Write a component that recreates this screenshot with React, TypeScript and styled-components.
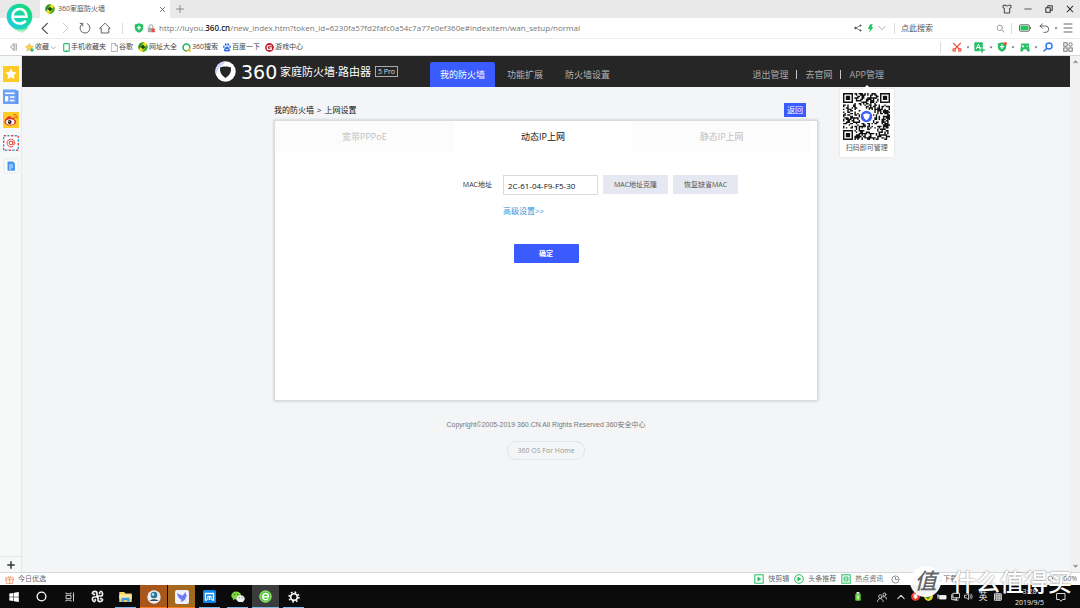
import React from 'react';
import styled, { createGlobalStyle, css } from 'styled-components';

const GlobalStyle = createGlobalStyle`
  * { box-sizing: border-box; }
  html, body, #root { height: 100%; }
  body {
    margin: 0;
    font-family: "Open Sans", "Noto Sans CJK SC", sans-serif;
    font-size: 7px;
    line-height: 12px;
    color: #444;
    overflow: hidden;
  }
  button, input { font: inherit; color: inherit; padding: 0; border: 0; background: none; }
  button { cursor: pointer; white-space: nowrap; }
  a { color: inherit; text-decoration: none; white-space: nowrap; }
  svg { display: block; flex: none; }
`;

/* ---------- browser frame ---------- */

const Desktop = styled.div`
  position: relative;
  display: flex;
  flex-direction: column;
  min-height: 100vh;
  background: #fff;
`;

const TabStrip = styled.header`
  display: flex;
  align-items: center;
  height: 18px;
  padding-left: 40px;
  background: #e9e9e9;
`;

const BrowserLogo = styled.div`
  position: absolute;
  left: 6px;
  top: 3px;
`;

const BrowserTab = styled.div`
  display: flex;
  align-items: center;
  gap: 3px;
  width: 130px;
  height: 18px;
  padding: 0 4px 0 5px;
  background: #fff;
  color: #555;
`;

const Spacer = styled.div`
  flex: 1;
`;

const IconButton = styled.button<{ $w?: number }>`
  display: flex;
  align-items: center;
  justify-content: center;
  flex: none;
  width: ${(p) => p.$w ?? 20}px;
  height: 16px;
`;

const AddressRow = styled.div`
  display: flex;
  align-items: center;
  height: 21px;
  padding: 0 2px 0 35px;
  border-bottom: 1px solid #ececec;
`;

const Divider = styled.span<{ $gap?: number }>`
  flex: none;
  width: 1px;
  height: 11px;
  margin: 0 ${(p) => p.$gap ?? 6}px;
  background: #dcdcdc;
`;

const UrlBox = styled.div`
  flex: 1;
  display: flex;
  align-items: center;
  gap: 3px;
  min-width: 0;
  padding-left: 4px;
  color: #777;
  font-size: 8px;
  white-space: nowrap;
  b { color: #222; font-weight: 600; }
`;

const SearchField = styled.input`
  width: 92px;
  font-size: 8px;
  outline: none;
  &::placeholder { color: #555; opacity: 1; }
`;

const BookmarkRow = styled.nav`
  display: flex;
  align-items: center;
  height: 17px;
  padding-right: 2px;
  border-bottom: 1px solid #d5d8d5;
`;

const Bookmark = styled.a<{ $after?: number }>`
  display: flex;
  align-items: center;
  gap: 1px;
  margin-right: ${(p) => p.$after ?? 5}px;
`;

const Body = styled.div`
  flex: 1;
  display: flex;
  min-height: 0;
`;

const Rail = styled.aside`
  display: flex;
  flex-direction: column;
  align-items: center;
  width: 22px;
  padding-top: 10px;
  gap: 7px;
  background: #f7f8f8;
  border-right: 1px solid #e6e8ea;
`;

const RailButton = styled.button`
  width: 16px;
  height: 16px;
`;

const RailAdd = styled.button`
  display: flex;
  align-items: center;
  justify-content: center;
  width: 100%;
  height: 16px;
  margin-top: auto;
  border-top: 1px solid #e3e5e7;
`;

const ScrollTrack = styled.div`
  display: flex;
  flex-direction: column;
  justify-content: space-between;
  align-items: center;
  width: 10px;
  padding: 3px 0;
  background: #f1f1f1;
`;

/* ---------- router page ---------- */

const Page = styled.main`
  flex: 1;
  background: #f4f5f7;
`;

const SiteHeader = styled.header`
  height: 31px;
  background: #262626;
`;

const HeaderInner = styled.div`
  display: flex;
  align-items: flex-end;
  width: 686px;
  height: 31px;
  margin: 0 auto;
  padding: 0 5px 0 12px;
`;

const Brand = styled.a`
  display: flex;
  align-items: center;
  height: 31px;
  width: 215px;
  color: #fff;
`;

const BrandDigits = styled.span`
  width: 39px;
  margin-left: 5px;
  font: 19px/20px "DejaVu Sans", sans-serif;
`;

const BrandName = styled.span`
  margin-right: 4px;
  font-size: 11px;
`;

const BrandBadge = styled.span`
  padding: 0 2px;
  border: 1px solid #aaa;
  font-size: 7px;
  line-height: 9px;
  color: #ddd;
`;

const MainNav = styled.nav`
  display: flex;
  gap: 2px;
`;

const NavLink = styled.a<{ $active?: boolean }>`
  height: 25px;
  padding: 0 10px;
  font-size: 9px;
  line-height: 25px;
  color: #b4b4b4;
  ${(p) => p.$active && css`
    background: #3a5cff;
    color: #fff;
    border-radius: 2px 2px 0 0;
  `}
`;

const UserNav = styled.nav`
  display: flex;
  align-items: center;
  gap: 8px;
  height: 25px;
  margin-left: auto;
  font-size: 9px;
  color: #a8a8a8;
`;

const NavBar = styled.i`
  width: 1px;
  height: 9px;
  background: #c4c4c4;
`;

const AppLink = styled.div`
  position: relative;
`;

const QrCard = styled.div`
  position: absolute;
  top: 20px;
  left: 50%;
  transform: translateX(-50%);
  width: 54px;
  height: 68px;
  padding: 4px 3px 0;
  background: #fff;
  box-shadow: 0 0 2px rgba(0, 0, 0, 0.12);
  color: #555;
  font-size: 7px;
  text-align: center;
  white-space: nowrap;
  z-index: 1;
  svg { margin: 0 auto 2px; }
  &::before {
    content: "";
    position: absolute;
    left: 50%;
    bottom: 100%;
    margin-left: -4px;
    border: 4px solid transparent;
    border-top: 0;
    border-bottom-color: #fff;
  }
`;

const Content = styled.div`
  width: 544px;
  margin: 0 auto;
  padding-top: 16px;
`;

const CrumbRow = styled.div`
  display: flex;
  align-items: center;
  justify-content: space-between;
  height: 14px;
  padding-right: 12px;
  margin-bottom: 3px;
  font-size: 8px;
  color: #111;
`;

const Crumbs = styled.div`
  display: flex;
  gap: 3px;
`;

const BackButton = styled.button`
  width: 22px;
  height: 14px;
  background: #3a5cff;
  color: #fff;
  font-size: 8px;
`;

const Panel = styled.section`
  min-height: 281px;
  background: #fff;
  border: 1px solid #dadbdd;
  box-shadow: 0 0 3px rgba(0, 0, 0, 0.2);
`;

const TabList = styled.div`
  display: grid;
  grid-template-columns: repeat(3, 1fr);
  padding-right: 6px;
`;

const PanelTab = styled.button<{ $active?: boolean }>`
  height: 31px;
  font-size: 9px;
  color: ${(p) => (p.$active ? '#111' : '#bfbfbf')};
  background: ${(p) => (p.$active ? '#fff' : '#fcfcfc')};
`;

const WanForm = styled.form`
  display: grid;
  grid-template-columns: 217px 1fr;
  column-gap: 11px;
  align-items: center;
  margin-top: 23px;
`;

const FieldLabel = styled.label`
  text-align: right;
  color: #333;
`;

const FieldRow = styled.div`
  display: flex;
  gap: 5px;
`;

const MacInput = styled.input`
  width: 95px;
  height: 20px;
  padding: 0 4px;
  border: 1px solid #d9d9de;
  background: #fff;
  color: #111;
  font-size: 8px;
`;

const SoftButton = styled.button`
  width: 65px;
  height: 19px;
  background: #e5e8f0;
  color: #555;
`;

const AdvancedLink = styled.a`
  grid-column: 2;
  justify-self: start;
  margin-top: 10px;
  color: #3b9ae0;
  font-size: 8px;
`;

const SubmitButton = styled.button`
  grid-column: 1 / -1;
  justify-self: center;
  width: 65px;
  height: 19px;
  margin-top: 27px;
  border-radius: 1px;
  background: #3a5cff;
  color: #fff;
  font-weight: 700;
`;

const SiteFooter = styled.footer`
  display: flex;
  flex-direction: column;
  align-items: center;
  gap: 10px;
  padding-top: 18px;
  color: #777;
  font-family: "Liberation Sans", "Noto Sans CJK SC", sans-serif;
`;

const OsPill = styled.a`
  padding: 0 9px;
  border: 1px solid #e2e4e6;
  border-radius: 9px;
  color: #999;
  font-family: "Open Sans", sans-serif;
  line-height: 17px;
`;

/* ---------- status bar and taskbar ---------- */

const StatusBar = styled.footer`
  display: flex;
  align-items: center;
  height: 13px;
  padding: 0 3px 0 5px;
  border-top: 1px solid #d5d8d8;
  background: #fff;
  color: #666;
`;

const StatusItem = styled.button<{ $after?: number }>`
  display: flex;
  align-items: center;
  gap: 4px;
  margin-right: ${(p) => p.$after ?? 5}px;
`;

const Taskbar = styled.div`
  display: flex;
  height: 23px;
  background: #0b0b0b;
  color: #eee;
`;

const TaskApps = styled.div`
  display: flex;
  gap: 1px;
`;

const TaskButton = styled.button<{ $bg?: string; $line?: string; $full?: boolean }>`
  position: relative;
  display: flex;
  align-items: center;
  justify-content: center;
  width: 27px;
  height: 23px;
  background: ${(p) => p.$bg ?? 'transparent'};
  ${(p) => p.$line && css`
    &::after {
      content: "";
      position: absolute;
      left: ${p.$full ? 0 : 3}px;
      right: ${p.$full ? 0 : 3}px;
      bottom: 0;
      height: 1px;
      background: ${p.$line};
    }
  `}
`;

const Tray = styled.div`
  display: flex;
  align-items: center;
  margin-left: auto;
  padding-right: 11px;
`;

const TraySlot = styled.button<{ $w: number }>`
  display: flex;
  align-items: center;
  justify-content: center;
  width: ${(p) => p.$w}px;
  font-size: 9px;
`;

const Clock = styled.div`
  width: 47px;
  text-align: center;
  line-height: 11px;
`;

const Watermark = styled.div`
  position: absolute;
  right: 8px;
  bottom: 11px;
  display: flex;
  align-items: center;
  gap: 11px;
  color: #fff;
  font-size: 24px;
  line-height: 30px;
  font-weight: 500;
  text-shadow: 0 0 2px rgba(0, 0, 0, 0.55);
  white-space: nowrap;
  pointer-events: none;
`;

const WatermarkSeal = styled.span`
  width: 31px;
  height: 31px;
  border-radius: 50%;
  background: rgba(255, 255, 255, 0.95);
  color: #666;
  font-size: 22px;
  line-height: 29px;
  font-style: italic;
  text-align: center;
  text-shadow: none;
`;

/* ---------- drawings ---------- */

type StrokeProps = { d: string; w?: number; h?: number; box?: string; color?: string; sw?: number; fill?: string };

const Stroke = ({ d, w = 10, h = 10, box = '0 0 10 10', color = '#666', sw = 1, fill = 'none' }: StrokeProps) => (
  <svg width={w} height={h} viewBox={box} fill={fill} stroke={color} strokeWidth={sw} strokeLinecap="round" strokeLinejoin="round">
    <path d={d} />
  </svg>
);

const Caret = () => (
  <svg width="4" height="3" viewBox="0 0 4 3"><path d="M0.5 0.5h3L2 2.5z" fill="#666" /></svg>
);

const SafeBall = () => (
  <svg width="10" height="10" viewBox="0 0 10 10">
    <circle cx="5" cy="5" r="4.8" fill="#f6e01b" />
    <path d="M1.300 8A4.800 4.800 0 0 1 6.500.5C4 1.500 3.500 3 3.600 4.600 2.400 5.200 1.500 6.500 1.300 8z" fill="#1f9a36" />
    <path d="M8.700 2A4.800 4.800 0 0 1 3.500 9.500C6 8.500 6.500 7 6.400 5.400 7.600 4.800 8.500 3.500 8.700 2z" fill="#3fb53a" />
    <path d="M5 2.800v4.400M2.800 5h4.400" stroke="#123d14" strokeWidth="1.500" />
  </svg>
);

const BrowserE = () => (
  <svg width="28" height="32" viewBox="0 0 28 32">
    <defs>
      <linearGradient id="eGrad" x1="0" y1="1" x2="1" y2="0">
        <stop offset="0" stopColor="#1fc8f5" />
        <stop offset=".5" stopColor="#18d6ac" />
        <stop offset="1" stopColor="#16dc62" />
      </linearGradient>
      <linearGradient id="eTail" x1="0" y1="0" x2="0" y2="1">
        <stop offset="0" stopColor="#2be07c" />
        <stop offset="1" stopColor="#2be07c" stopOpacity="0" />
      </linearGradient>
    </defs>
    <path d="M6 24h16c-1 3-4 4-6 7-1-2-6-3-10-7z" fill="url(#eTail)" />
    <circle cx="13.500" cy="13.500" r="12.800" fill="url(#eGrad)" />
    <path d="M7 13.800H20.500C20.500 8.800 17.500 6 13.800 6 9.500 6 6.500 9.200 6.500 13.200c0 4.500 3.200 7.300 7.300 7.300 2.600 0 4.700-1 6-2.600" fill="none" stroke="#fff" strokeWidth="2.600" />
  </svg>
);

const ShieldIcon = ({ dot }: { dot?: boolean }) => (
  <svg width="10" height="10" viewBox="0 0 10 10">
    <path d="M5 .3 9.200 1.500v3.300C9.200 7.300 7.300 9 5 9.800 2.700 9 .8 7.300.8 4.800V1.500z" fill="#25c065" />
    <path d="M5 2.500v4.500M3 4.700h4" stroke="#fff" strokeWidth="1.200" />
    {dot && <circle cx="8.400" cy="1.600" r="1.600" fill="#f4503c" />}
  </svg>
);

const LockIcon = () => (
  <svg width="9" height="9" viewBox="0 0 9 9">
    <path d="M2 4V2.800a2 2 0 0 1 4 0V4" fill="none" stroke="#999" />
    <rect x="0.800" y="3.800" width="6.200" height="4.400" rx=".6" fill="#aaa" />
    <path d="m4.800 5 3.200 3.200M8 5 4.800 8.200" stroke="#e64040" strokeWidth="1.200" />
  </svg>
);

const StarBookmark = () => (
  <svg width="9" height="9" viewBox="0 0 9 9">
    <path d="m4.400.6 1.100 2.500 2.700.3-2 1.900.6 2.700-2.400-1.400L2 8l.6-2.700L.5 3.400l2.800-.3z" fill="#ffd65a" stroke="#f0a520" strokeWidth=".7" />
    <circle cx="7" cy="7" r="1.700" fill="#2fc274" />
  </svg>
);

const PawIcon = () => (
  <svg width="8" height="9" viewBox="0 0 8 9" fill="#2d6de8">
    <ellipse cx="2.700" cy="1.500" rx=".9" ry="1.300" /><ellipse cx="5.200" cy="1.500" rx=".9" ry="1.300" />
    <ellipse cx=".9" cy="3.800" rx=".8" ry="1.200" /><ellipse cx="7.100" cy="3.800" rx=".8" ry="1.200" />
    <path d="M4 3.600c1.400 0 1.700 1.500 2.600 2.300.9 1 .5 2.600-.9 2.600-.7 0-1-.3-1.700-.3s-1 .3-1.700.3C.9 8.500.5 6.900 1.400 5.900 2.300 5.100 2.600 3.600 4 3.600z" />
    <path d="M2.800 6.500h2.600" stroke="#fff" strokeWidth=".8" />
  </svg>
);

const GameBadge = () => (
  <svg width="9" height="9" viewBox="0 0 9 9">
    <circle cx="4.500" cy="4.500" r="4.400" fill="#c11f2e" />
    <path d="M6.700 2.800H3.200a1 1 0 0 0-.9 1v1.600a1 1 0 0 0 .9 1h3.100V4.700H4.500" fill="none" stroke="#fff" strokeWidth="1.100" />
  </svg>
);

const Scissors = () => (
  <svg width="10" height="10" viewBox="0 0 10 10" fill="none" stroke="#f2503e" strokeWidth="1.200">
    <path d="M1.200.8 7 7M8.800.8 3 7" /><circle cx="2.200" cy="7.900" r="1.300" /><circle cx="7.800" cy="7.900" r="1.300" />
  </svg>
);

const TranslateIcon = () => (
  <svg width="11" height="11" viewBox="0 0 10 10">
    <rect x=".3" y=".3" width="7.700" height="8" rx=".8" fill="#25c065" />
    <path d="m2 6.500 2-4.500 2 4.500M2.800 5h2.500" fill="none" stroke="#fff" strokeWidth=".9" />
    <path d="M7.300 4.800v5M4.800 7.300h5" stroke="#fff" strokeWidth="2.800" />
    <path d="M7.300 4.800v5M4.800 7.300h5" stroke="#25c065" strokeWidth="1.300" />
  </svg>
);

const Gamepad = () => (
  <svg width="10" height="9" viewBox="0 0 10 9">
    <path d="M1.200.6h7.600l.9 8H7.500L6.300 6.300H3.700L2.500 8.600H.3z" fill="#25c065" />
    <path d="M3 2v2.600M1.700 3.300h2.600M6.500 3.300h1.500" stroke="#fff" strokeWidth=".9" />
  </svg>
);

const BatteryIcon = () => (
  <svg width="12" height="8" viewBox="0 0 12 8">
    <rect x=".5" y=".8" width="9.800" height="6.400" rx=".8" fill="#fff" stroke="#666" />
    <rect x="1.500" y="1.800" width="7.800" height="4.400" fill="#1fc759" />
    <path d="M11.400 2.800v2.400" stroke="#666" />
  </svg>
);

const ShareIcon = () => (
  <svg width="8" height="8" viewBox="0 0 8 8" fill="#555" stroke="#555">
    <path d="M6.500 1.500 1.500 4l5 2.500" fill="none" strokeWidth=".7" />
    <circle cx="1.500" cy="4" r=".8" /><circle cx="6.500" cy="1.500" r=".6" /><circle cx="6.500" cy="6.500" r=".6" />
  </svg>
);

const AppsIcon = () => (
  <svg width="10" height="10" viewBox="0 0 10 10" fill="none" stroke="#666" strokeWidth=".9">
    <rect x=".8" y=".8" width="3.300" height="3.300" /><circle cx="7.500" cy="2.500" r="1.700" />
    <rect x=".8" y="5.900" width="3.300" height="3.300" /><rect x="5.900" y="5.900" width="3.300" height="3.300" />
  </svg>
);

const RailStar = () => (
  <svg width="16" height="16" viewBox="0 0 16 16">
    <rect width="16" height="16" fill="#ffc928" />
    <path d="m8 2.500 1.700 3.600 3.900.5-2.900 2.700.8 3.900L8 11.300l-3.500 1.900.8-3.900L2.400 6.600l3.900-.5z" fill="#fff" />
  </svg>
);

const RailNews = () => (
  <svg width="16" height="16" viewBox="0 0 16 16">
    <path d="M3 1.500h12.500V15H3z" fill="#5b93ef" /><rect y=".5" width="13.300" height="14.500" fill="#6ba1fb" />
    <path d="M2 4.300h9.500M7 8h4.500M7 11.500h4.500" stroke="#fff" strokeWidth="1.600" /><path d="M2 7.200h3.300v5.100H2z" fill="#fff" />
  </svg>
);

const RailWeibo = () => (
  <svg width="16" height="16" viewBox="0 0 16 16">
    <rect width="16" height="16" fill="#ffcb2b" />
    <path d="M6.300 4.300C4 5 1.500 7.500 1.500 9.800c0 2.300 2.700 3.700 5.700 3.700 3.600 0 6-1.800 6-3.900 0-1.300-1-1.900-2-2.200.4-1.400-.6-2-2.800-1.200.3-1.300-.3-2.300-2.100-1.900z" fill="#e6322b" />
    <ellipse cx="7.200" cy="9.900" rx="4.200" ry="2.700" fill="#fff" /><circle cx="6.700" cy="10" r="1.900" fill="#222" /><circle cx="6.200" cy="9.500" r=".6" fill="#fff" />
    <path d="M10.300 2.600c2.500-.4 4.200 1.500 3.700 4M10.800 4.700c1.200-.1 1.700.7 1.500 1.700" fill="none" stroke="#f0621d" strokeWidth="1.100" />
  </svg>
);

const RailMail = () => (
  <svg width="16" height="16" viewBox="0 0 16 16" fill="none">
    <rect x=".7" y=".7" width="14.600" height="14.600" fill="#fff" />
    <rect x=".7" y=".7" width="14.600" height="14.600" stroke="#e8483d" strokeWidth="1.400" strokeDasharray="2.400 4.900" />
    <rect x=".7" y=".7" width="14.600" height="14.600" stroke="#3f9be8" strokeWidth="1.400" strokeDasharray="2.400 4.900" strokeDashoffset="-3.650" />
    <circle cx="8" cy="8" r="1.800" stroke="#e8483d" strokeWidth="1.100" />
    <path d="M9.800 6v2.800c0 1.500 2 1.200 2-.8A3.900 3.900 0 1 0 10 11.300" stroke="#e8483d" strokeWidth="1" />
  </svg>
);

const RailDoc = () => (
  <svg width="16" height="16" viewBox="0 0 16 16">
    <rect x="1" y="1" width="14" height="14" rx="2" fill="#fff" stroke="#e6e8eb" />
    <path d="M4.500 3.500H10l2 2v7.200H4.500z" fill="#4594ee" /><path d="M6 7h4.200M6 9h4.200M6 11h2.500" stroke="#fff" strokeWidth=".8" />
  </svg>
);

const BrandShield = () => (
  <svg width="21" height="21" viewBox="0 0 21 21">
    <circle cx="10.500" cy="10.500" r="10.200" fill="#fff" />
    <path d="M1 13.500A10 10 0 0 1 10.500.4L8 3.800 4.500 6z" fill="#cdd3fb" />
    <path d="M5 6.600c2.200-1.600 8.800-1.600 11 0 .4 4.800-1.800 8.500-5.500 10.300C6.800 15.100 4.600 11.400 5 6.600z" fill="#262626" />
  </svg>
);

const QR_SIZE = 33;

const buildQrPath = () => {
  let seed = 360;
  const next = () => {
    seed = (seed * 1103515245 + 12345) % 2147483648;
    return seed / 2147483648;
  };
  const last = QR_SIZE - 7;
  const finder = (x: number, y: number) => {
    const origins = [[0, 0], [last, 0], [0, last]];
    for (const [ox, oy] of origins) {
      const dx = x - ox;
      const dy = y - oy;
      if (dx >= -1 && dx <= 7 && dy >= -1 && dy <= 7) {
        const ring = Math.max(Math.abs(dx - 3), Math.abs(dy - 3));
        return ring === 3 || ring <= 1 ? 1 : 0;
      }
    }
    return -1;
  };
  let path = '';
  for (let y = 0; y < QR_SIZE; y += 1) {
    for (let x = 0; x < QR_SIZE; x += 1) {
      const fixed = finder(x, y);
      const dark = next() > 0.47;
      if (fixed === 1 || (fixed === -1 && dark)) path += `M${x} ${y}h1v1h-1z`;
    }
  }
  return path;
};

const qrPath = buildQrPath();

const QrCode = () => (
  <svg width="47" height="47" viewBox="0 0 33 33" role="img" aria-label="APP">
    <path d={qrPath} fill="#111" />
    <rect x="12" y="12" width="9" height="9" rx="1" fill="#fff" />
    <circle cx="16.500" cy="16.500" r="4" fill="#3b62f6" />
    <path d="M14.300 15c1-.8 3.400-.8 4.400 0 .2 2-.8 3.400-2.200 4.100-1.400-.7-2.400-2.100-2.200-4.100z" fill="#fff" />
  </svg>
);

const GiftIcon = () => (
  <svg width="9" height="9" viewBox="0 0 9 9" fill="none" stroke="#f59a6c" strokeWidth=".9">
    <path d="M.6 2.800h7.800v2H.6zM1.200 4.800v3.600h6.600V4.800M4.500 2.800v5.600M4.500 2.800 2.800.8M4.500 2.800 6.200.8" />
  </svg>
);

const StatusGlyph = ({ round, lines }: { round?: boolean; lines?: boolean }) => (
  <svg width="10" height="10" viewBox="0 0 10 10" fill="none" stroke="#1fbe5c">
    {round ? <circle cx="5" cy="5" r="4.300" /> : <rect x=".8" y=".8" width="8.400" height="8.400" />}
    {lines ? <path d="M3 3h4v4H3zM3 5h4" strokeWidth=".9" /> : <path d="m3.800 3 3 2-3 2z" fill="#1fbe5c" strokeWidth=".6" />}
  </svg>
);

const WindowsIcon = () => (
  <svg width="10" height="10" viewBox="0 0 10 10" fill="#fff">
    <path d="M.3 1.500 4.500.9v3.800H.3zM5 .8 9.800.1v4.600H5zM.3 5.200h4.200V9L.3 8.400zM5 5.200h4.800v4.700L5 9.200z" />
  </svg>
);

const TaskViewIcon = () => (
  <svg width="10" height="10" viewBox="0 0 10 10" fill="none" stroke="#ddd" strokeWidth=".9">
    <path d="M1 .5v1.300h5V.5M1 9.500V8.200h5v1.300M1 3.400h5v3.200H1zM8.500.5v9M7.800 3.500h1.400" />
  </svg>
);

const FanIcon = () => (
  <svg width="13" height="13" viewBox="0 0 13 13" fill="none" stroke="#f2f2f2" strokeWidth="1.700" strokeLinecap="round">
    <path d="M6 6V3.300C6 .8 2 .8 1.300 3.200M7 6h2.700c2.500 0 2.500-4 .1-4.700M7 7v2.700c0 2.500 4 2.500 4.700.1M6 7H3.300C.8 7 .8 11 3.200 11.700M3.500 4.300H2.300M8.700 3.500V2.300M9.500 8.700h1.200M4.300 9.500v1.200" />
  </svg>
);

const FolderIcon = () => (
  <svg width="13" height="12" viewBox="0 0 13 12">
    <path d="M.3 1h5l1 1.400h6.400V11H.3z" fill="#f7d36a" /><path d="M.3 3.500h12.400V8H.3z" fill="#fde9a2" />
    <path d="M2.500 11V6.800h8V11H8.300V9.200H4.700V11z" fill="#3aa0e8" />
  </svg>
);

const PhotoIcon = () => (
  <svg width="14" height="14" viewBox="0 0 14 14">
    <circle cx="7" cy="7" r="6.700" fill="#e9eef2" /><circle cx="7" cy="5" r="3.300" fill="#2d7399" />
    <circle cx="6" cy="4.400" r="1.300" fill="#bfe3f4" /><path d="M2.500 11c2-2.500 7-2.500 9 0z" fill="#3b4a55" />
  </svg>
);

const BirdIcon = () => (
  <svg width="14" height="14" viewBox="0 0 14 14">
    <rect width="14" height="14" rx="2" fill="#eef0ff" />
    <path d="M2 3c2 1.500 4 1.700 5.500 2.800L10.500 2l.5 3 1.500.6-1.500 1c0 3-2 4.700-5.300 5.400.5-1 .7-1.500.5-2.500C3.800 8.500 2.500 6 2 3z" fill="#6a7cf0" />
  </svg>
);

const MaxthonIcon = () => (
  <svg width="13" height="13" viewBox="0 0 13 13">
    <rect width="13" height="13" rx="1.500" fill="#0c86ef" />
    <path d="M4 10H2.500V3.500h8V10H9M6.500 10V6.500" fill="none" stroke="#fff" strokeWidth="1.400" />
    <path d="M4.800 10V6.300h3.400V10" fill="none" stroke="#fff" />
  </svg>
);

const WechatIcon = () => (
  <svg width="14" height="12" viewBox="0 0 14 12">
    <path d="M5.200.5C2.400.5.3 2.300.3 4.600c0 1.300.7 2.400 1.800 3.100l-.4 1.500 1.700-.9c3.500.8 6.700-1 6.700-3.700C10.100 2.300 8 .5 5.200.5z" fill="#7bd63c" />
    <path d="M9.600 4.300c-2.300 0-4.200 1.500-4.200 3.400 0 2.300 2.700 4 5.600 3.200l1.300.7-.3-1.200c1-.6 1.700-1.600 1.700-2.700 0-1.900-1.800-3.400-4.100-3.400z" fill="#f0f0f0" />
    <g fill="#333"><circle cx="3.600" cy="3.500" r=".6" /><circle cx="6.700" cy="3.500" r=".6" /><circle cx="8.300" cy="6.800" r=".5" /><circle cx="11" cy="6.800" r=".5" /></g>
  </svg>
);

const GreenE = () => (
  <svg width="13" height="13" viewBox="0 0 13 13">
    <circle cx="6.500" cy="6.500" r="6.200" fill="#4cc22f" /><circle cx="6.500" cy="6.500" r="5.500" fill="none" stroke="#b9eda0" strokeWidth=".8" />
    <path d="M3.500 6.800h6C9.500 4.500 8.300 3.500 6.500 3.500a3.100 3.100 0 1 0 2.700 4.800" fill="none" stroke="#fff" strokeWidth="1.400" />
  </svg>
);

const GearIcon = () => (
  <svg width="12" height="12" viewBox="0 0 12 12" fill="none" stroke="#fff">
    <circle cx="6" cy="6" r="3.300" strokeWidth="1.600" />
    <circle cx="6" cy="6" r="4.900" strokeWidth="1.600" strokeDasharray="1.700 2.150" />
  </svg>
);

const TrayDot = ({ color, check }: { color: string; check?: boolean }) => (
  <svg width="9" height="9" viewBox="0 0 9 9">
    <circle cx="4.500" cy="4.500" r="4.400" fill={color} />
    <path d={check ? 'm2 4.500 2 2 3.200-4' : 'M2.500 3h4M4.500 3v4M2.500 5h4'} fill="none" stroke={check ? '#1c9a35' : '#fff'} strokeWidth="1.400" />
  </svg>
);

/* ---------- screen ---------- */

export default function App() {
  return (
    <>
      <GlobalStyle />
      <Desktop>
        <TabStrip>
          <BrowserTab>
            <SafeBall />
            <span>360家庭防火墙</span>
            <Spacer />
            <IconButton $w={8} aria-label="关闭标签">
              <Stroke w={7} h={7} d="m2 2 6 6M8 2 2 8" sw={1.300} />
            </IconButton>
          </BrowserTab>
          <IconButton aria-label="新标签"><Stroke w={8} h={8} d="M5 .5v9M.5 5h9" color="#777" /></IconButton>
          <Spacer />
          <IconButton $w={21} aria-label="皮肤"><Stroke box="0 0 10 10" d="M3.300 1.300H1v2.500l1.300.2V9h5.400V4L9 3.800V1.300H6.700c-.8 1-2.600 1-3.400 0z" color="#444" /></IconButton>
          <IconButton $w={21} aria-label="最小化"><Stroke w={8} h={8} d="M1 5h8" color="#333" /></IconButton>
          <IconButton $w={21} aria-label="还原"><Stroke w={8} h={8} d="M1 3.500h5.500V9H1zM3.500 3.500V1H9v5.500H6.500" color="#333" sw={1.300} /></IconButton>
          <IconButton $w={21} aria-label="关闭"><Stroke w={8} h={8} d="m1.500 1.500 7 7M8.500 1.500l-7 7" color="#333" sw={1.300} /></IconButton>
        </TabStrip>
        <BrowserLogo><BrowserE /></BrowserLogo>
        <AddressRow>
          <IconButton aria-label="后退"><Stroke d="M7 0 2 5l5 5" w={11} h={11} color="#555" /></IconButton>
          <IconButton aria-label="前进"><Stroke d="m3 0 5 5-5 5" color="#ccc" /></IconButton>
          <IconButton aria-label="刷新"><Stroke w={12} h={12} box="0 0 12 12" d="M8.300 1.600a5 5 0 1 1-4.600 0M3.700 4V1.400H1.200" /></IconButton>
          <IconButton aria-label="主页"><Stroke w={12} h={12} box="0 0 12 12" d="M.8 6.300 6 1.200l5.200 5.100H9.800V11H2.200V6.300z" /></IconButton>
          <Divider $gap={7} />
          <UrlBox>
            <ShieldIcon />
            <LockIcon />
            <div role="textbox" aria-label="网址">
              http://luyou.<b>360.cn</b>/new_index.htm?token_id=6230fa57fd2fafc0a54c7a77e0ef360e#indexitem/wan_setup/normal
            </div>
          </UrlBox>
          <IconButton $w={13} aria-label="分享"><ShareIcon /></IconButton>
          <IconButton $w={12} aria-label="加速">
            <svg width="7" height="9" viewBox="0 0 7 9"><path d="M3.200.3h2.600L4.500 3.300h1.900L2 8.700l1-3.800H.8z" fill="#1fc45e" /></svg>
          </IconButton>
          <IconButton $w={12} aria-label="展开"><Stroke w={8} h={8} d="m1 3 4 4 4-4" color="#999" /></IconButton>
          <Divider $gap={6} />
          <SearchField placeholder="点此搜索" aria-label="点此搜索" />
          <IconButton $w={14} aria-label="搜索"><Stroke w={9} h={9} d="M7.300 4.300a3 3 0 1 1-6 0 3 3 0 0 1 6 0M6.500 6.500 9 9" color="#999" /></IconButton>
          <Divider $gap={4} />
          <IconButton $w={18} aria-label="电量"><BatteryIcon /></IconButton>
          <IconButton aria-label="恢复"><Stroke w={11} h={10} box="0 0 11 10" d="M3.500.8 1 3l2.500 2.200M1 3h5.500a3.200 3.200 0 0 1 0 6.400H5" /></IconButton>
          <Caret />
          <IconButton aria-label="菜单"><Stroke w={10} h={10} d="M1 1h8M1 5h8M1 9h8" /></IconButton>
        </AddressRow>
        <BookmarkRow>
          <IconButton $w={25} aria-label="收起"><Stroke w={8} h={8} d="M6 1 2 5l4 4zM9 1v8" color="#777" /></IconButton>
          <Bookmark href="#fav" $after={6}><StarBookmark />收藏<Stroke w={7} h={7} d="m2 4 3 3 3-3" color="#888" /></Bookmark>
          <Bookmark href="#mobile">
            <svg width="7" height="9" viewBox="0 0 7 9"><rect x=".7" y=".6" width="5.600" height="7.800" rx=".8" fill="#fff" stroke="#2fc274" strokeWidth="1.200" /><path d="M2.800 7.500h1.400" stroke="#2fc274" /></svg>
            手机收藏夹
          </Bookmark>
          <Bookmark href="#guge"><Stroke w={7} h={9} box="0 0 7 9" d="M.6.6h3.600l2.200 2.200v5.600H.6zM4.200.6v2.200h2.200" color="#999" sw={0.8} />谷歌</Bookmark>
          <Bookmark href="#hao"><SafeBall />网址大全</Bookmark>
          <Bookmark href="#so">
            <svg width="9" height="9" viewBox="0 0 9 9" fill="none" strokeWidth="1.600"><circle cx="4.400" cy="4.400" r="3.400" stroke="#20b75c" /><path d="M4.400 7.800a3.400 3.400 0 0 0 3.400-3.400M7 7l1.600 1.600" stroke="#f7b21c" /></svg>
            360搜索
          </Bookmark>
          <Bookmark href="#baidu"><PawIcon />百度一下</Bookmark>
          <Bookmark href="#game"><GameBadge />游戏中心</Bookmark>
          <Spacer />
          <Divider $gap={7} />
          <IconButton $w={18} aria-label="截图"><Scissors /></IconButton>
          <Caret />
          <IconButton $w={19} aria-label="翻译"><TranslateIcon /></IconButton>
          <Caret />
          <IconButton $w={18} aria-label="网盾"><ShieldIcon dot /></IconButton>
          <Caret />
          <IconButton $w={19} aria-label="游戏"><Gamepad /></IconButton>
          <Caret />
          <IconButton $w={20} aria-label="查找"><Stroke d="M9 4a3 3 0 1 1-6 0 3 3 0 0 1 6 0M3.800 6.200 1 9" color="#2f7bf0" sw={1.500} /></IconButton>
          <IconButton aria-label="扩展"><AppsIcon /></IconButton>
        </BookmarkRow>
        <Body>
          <Rail>
            <RailButton aria-label="收藏夹"><RailStar /></RailButton>
            <RailButton aria-label="新闻"><RailNews /></RailButton>
            <RailButton aria-label="微博"><RailWeibo /></RailButton>
            <RailButton aria-label="邮箱"><RailMail /></RailButton>
            <RailButton aria-label="文档"><RailDoc /></RailButton>
            <RailAdd aria-label="添加"><Stroke w={8} h={8} d="M5 1v8M1 5h8" color="#333" sw={1.800} /></RailAdd>
          </Rail>
          <Page>
            <SiteHeader>
              <HeaderInner>
                <Brand href="#home">
                  <BrandShield />
                  <BrandDigits>360</BrandDigits>
                  <BrandName>家庭防火墙·路由器</BrandName>
                  <BrandBadge>5 Pro</BrandBadge>
                </Brand>
                <MainNav>
                  <NavLink href="#firewall" $active>我的防火墙</NavLink>
                  <NavLink href="#extend">功能扩展</NavLink>
                  <NavLink href="#settings">防火墙设置</NavLink>
                </MainNav>
                <UserNav>
                  <a href="#logout">退出管理</a>
                  <NavBar />
                  <a href="#site">去官网</a>
                  <NavBar />
                  <AppLink>
                    <a href="#app">APP管理</a>
                    <QrCard><QrCode />扫码即可管理</QrCard>
                  </AppLink>
                </UserNav>
              </HeaderInner>
            </SiteHeader>
            <Content>
              <CrumbRow>
                <Crumbs><a href="#firewall">我的防火墙</a><span>&gt;</span><span>上网设置</span></Crumbs>
                <BackButton>返回</BackButton>
              </CrumbRow>
              <Panel>
                <TabList role="tablist">
                  <PanelTab role="tab">宽带PPPoE</PanelTab>
                  <PanelTab role="tab" aria-selected $active>动态IP上网</PanelTab>
                  <PanelTab role="tab">静态IP上网</PanelTab>
                </TabList>
                <WanForm onSubmit={(e) => e.preventDefault()}>
                  <FieldLabel htmlFor="mac">MAC地址</FieldLabel>
                  <FieldRow>
                    <MacInput id="mac" defaultValue="2C-61-04-F9-F5-30" />
                    <SoftButton type="button">MAC地址克隆</SoftButton>
                    <SoftButton type="button">恢复缺省MAC</SoftButton>
                  </FieldRow>
                  <AdvancedLink href="#advanced">高级设置&gt;&gt;</AdvancedLink>
                  <SubmitButton type="submit">确定</SubmitButton>
                </WanForm>
              </Panel>
              <SiteFooter>
                <span>Copyright©2005-2019 360.CN All Rights Reserved 360安全中心</span>
                <OsPill href="#os">360 OS For Home</OsPill>
              </SiteFooter>
            </Content>
          </Page>
          <ScrollTrack>
            <Stroke w={5} h={5} d="m1 7 4-4 4 4z" color="#888" fill="#888" />
            <Stroke w={5} h={5} d="m1 3 4 4 4-4z" color="#888" fill="#888" />
          </ScrollTrack>
        </Body>
        <StatusBar>
          <StatusItem><GiftIcon />今日优选</StatusItem>
          <Spacer />
          <StatusItem><StatusGlyph />快剪辑</StatusItem>
          <StatusItem><StatusGlyph round />头条推荐</StatusItem>
          <StatusItem $after={8}><StatusGlyph lines />热点资讯</StatusItem>
          <StatusItem $after={36} aria-label="历史"><Stroke w={9} h={9} d="M9 5a4 4 0 1 1-8 0 4 4 0 0 1 8 0M5 2.500V5h2" color="#777" sw={0.9} /></StatusItem>
          <StatusItem $after={90}>↓下载</StatusItem>
          <StatusItem $after={4} aria-label="缩放"><Stroke w={8} h={8} d="M7.300 4.300a3 3 0 1 1-6 0 3 3 0 0 1 6 0M6.500 6.500 9 9" color="#888" /></StatusItem>
          <StatusItem $after={0}>100%</StatusItem>
        </StatusBar>
        <Taskbar>
          <TaskApps>
            <TaskButton aria-label="开始"><WindowsIcon /></TaskButton>
            <TaskButton aria-label="Cortana"><Stroke w={11} h={11} d="M9 5a4 4 0 1 1-8 0 4 4 0 0 1 8 0" color="#fff" sw={1.200} /></TaskButton>
            <TaskButton aria-label="任务视图"><TaskViewIcon /></TaskButton>
            <TaskButton aria-label="风扇"><FanIcon /></TaskButton>
            <TaskButton aria-label="文件" $line="#7cb9e8"><FolderIcon /></TaskButton>
            <TaskButton aria-label="照片" $bg="#a8571c" $line="#ff7a1a" $full><PhotoIcon /></TaskButton>
            <TaskButton aria-label="飞鸟" $bg="#a3691f" $line="#ff7a1a" $full><BirdIcon /></TaskButton>
            <TaskButton aria-label="傲游" $line="#7cb9e8"><MaxthonIcon /></TaskButton>
            <TaskButton aria-label="微信" $line="#7cb9e8"><WechatIcon /></TaskButton>
            <TaskButton aria-label="浏览器" $bg="#3b3d3c" $line="#7cb9e8" $full><GreenE /></TaskButton>
            <TaskButton aria-label="设置" $line="#7cb9e8"><GearIcon /></TaskButton>
          </TaskApps>
          <Tray>
            <TraySlot $w={24} aria-label="U盘"><svg width="6" height="9" viewBox="0 0 6 9"><path d="M1.500 0h3v2h-3z" fill="#ddd" /><rect x=".3" y="1.800" width="5.400" height="7" rx=".8" fill="#5fd338" /><path d="M3 3.500v4M1.800 5h2.400" stroke="#fff" strokeWidth=".8" /></svg></TraySlot>
            <TraySlot $w={24} aria-label="联系人"><Stroke w={10} h={10} d="M5 4.500a1.700 1.700 0 1 1-3.400 0 1.700 1.700 0 0 1 3.400 0M.5 9.500c.3-4 5.300-4 5.700 0M9 2.500a1.500 1.500 0 1 1-3 0 1.500 1.500 0 0 1 3 0M6 5c2-1 3.300 0 3.500 2" color="#ddd" sw={0.9} /></TraySlot>
            <TraySlot $w={14} aria-label="更多"><Stroke w={8} h={8} d="m1 7 4-4 4 4" color="#ddd" sw={1.300} /></TraySlot>
            <TraySlot $w={14} aria-label="值得买"><TrayDot color="#e83a2e" /></TraySlot>
            <TraySlot $w={13} aria-label="安全"><TrayDot color="#f4d422" check /></TraySlot>
            <TraySlot $w={14} aria-label="电池"><Stroke w={10} h={8} box="0 0 10 8" d="M3 2.500h6v3.500H3zM1 1.500v4M.5 3h2" color="#eee" fill="#eee" sw={0.9} /></TraySlot>
            <TraySlot $w={13} aria-label="网络"><Stroke w={9} h={9} d="M2.500 1.500h7v5h-7zM.8 3v5.500h4M6 6.500v2.300M4 9h4" color="#eee" /></TraySlot>
            <TraySlot $w={14} aria-label="音量"><Stroke w={10} h={9} d="M.5 3.500h1.600L4.500 1.500v7L2.100 6.500H.5zM6 3.500c.8 1 .8 2 0 3M7.300 2.300c1.600 1.800 1.600 3.600 0 5.400" color="#eee" sw={0.9} /></TraySlot>
            <TraySlot $w={14}>英</TraySlot>
            <TraySlot $w={16} aria-label="输入法"><Stroke w={8} h={8} d="M1 1h8v8H1zM1 3.600h8M1 6.300h8M3.600 1v8M6.300 1v8" color="#eee" sw={1.200} /></TraySlot>
            <Clock>3:28<br />2019/9/5</Clock>
            <TraySlot $w={16} aria-label="通知"><Stroke w={10} h={10} d="M1 1.500h8v6H6.500L5 9.300 3.500 7.500H1z" color="#eee" sw={0.9} /></TraySlot>
          </Tray>
        </Taskbar>
        <Watermark aria-hidden><WatermarkSeal>值</WatermarkSeal><span>什么值得买</span></Watermark>
      </Desktop>
    </>
  );
}
